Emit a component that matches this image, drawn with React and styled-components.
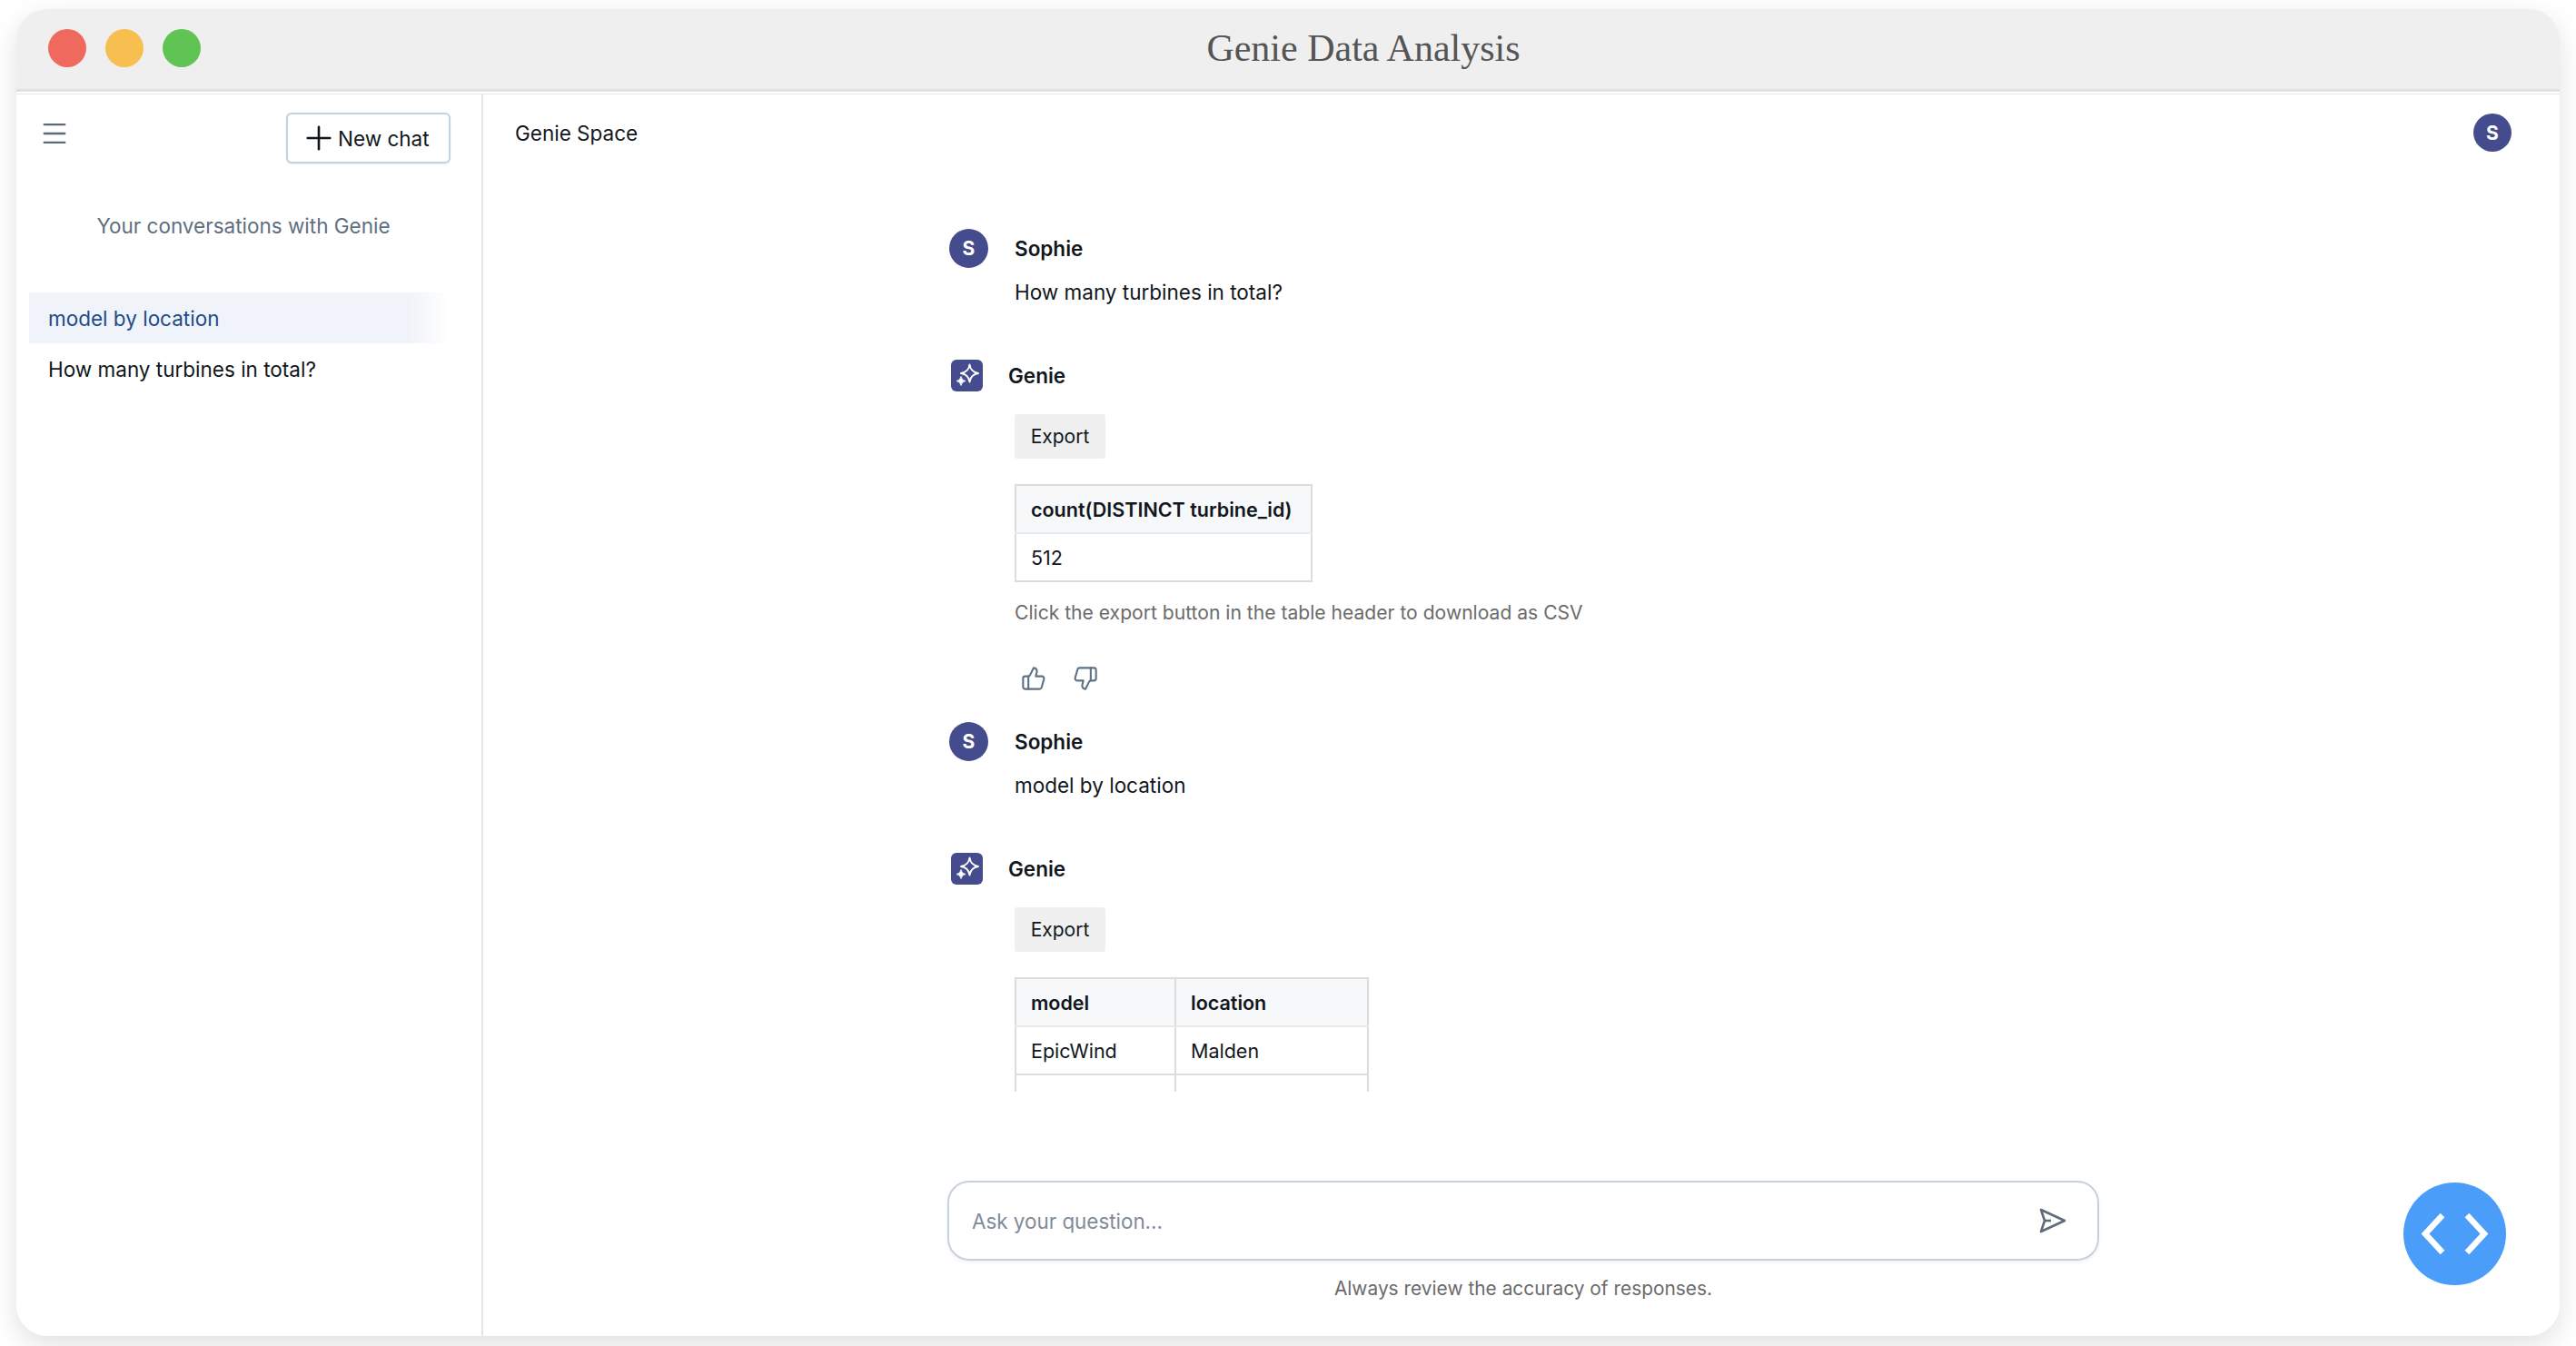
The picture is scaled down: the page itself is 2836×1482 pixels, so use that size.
import React from "react";
import styled, { createGlobalStyle } from "styled-components";
import { Menu, Plus, ThumbsUp, ThumbsDown } from "lucide-react";

const GlobalStyle = createGlobalStyle`
  html, body {
    margin: 0;
    padding: 0;
    background: #ffffff;
    font-family: Inter, "Liberation Sans", sans-serif;
    color: #11171c;
  }
  * { box-sizing: border-box; }
`;

const Page = styled.div`
  width: 2836px;
  height: 1482px;
  padding: 10px 18px 11px;
  overflow: hidden;
`;

const Window = styled.div`
  height: 100%;
  display: flex;
  flex-direction: column;
  background: #ffffff;
  border-radius: 34px;
  box-shadow: 0 10px 30px rgba(0, 0, 0, 0.12);
  overflow: hidden;
`;

const TitleBar = styled.div`
  height: 91px;
  flex-shrink: 0;
  margin-bottom: 2px;
  display: flex;
  align-items: center;
  padding: 0 37px 3px 35px;
  background: #efefef;
  border-bottom: 3px solid #e0e0e0;
`;

const Lights = styled.div`
  display: flex;
  gap: 21px;
`;

const Light = styled.span`
  width: 42px;
  height: 42px;
  border-radius: 50%;
  background: ${(p) => p.$color};
`;

const Title = styled.div`
  flex: 1;
  text-align: center;
  font-family: "Liberation Serif", serif;
  font-size: 42px;
  color: #555555;
`;

const Body = styled.div`
  flex: 1;
  min-height: 0;
  display: flex;
  border-top: 1px solid #e3e5e8;
`;

const Sidebar = styled.aside`
  width: 514px;
  flex-shrink: 0;
  border-right: 2px solid #e2e5e9;
  padding: 20px 0 0 14px;
`;

const SideTop = styled.div`
  display: flex;
  justify-content: space-between;
  align-items: flex-start;
  padding: 0 34px 0 11px;
`;

const MenuButton = styled.div`
  margin-top: 6px;
  display: flex;
  color: #5c6b7c;
`;

const NewChat = styled.button`
  width: 181px;
  height: 56px;
  display: flex;
  align-items: center;
  padding: 0 0 0 13px;
  background: #ffffff;
  border: 2px solid #c6d1de;
  border-radius: 6px;
  box-shadow: 0 1px 2px rgba(0, 0, 0, 0.08);
  font: 400 22.5px Inter, sans-serif;
  color: #11171c;
`;

const SideHeading = styled.div`
  margin-top: 51px;
  padding-right: 26px;
  text-align: center;
  font-size: 22.5px;
  line-height: 36px;
  color: #5f6f81;
`;

const ChatList = styled.div`
  margin-top: 55px;
  width: 464px;
`;

const ChatItem = styled.div`
  height: 56px;
  padding-left: 21px;
  display: flex;
  align-items: center;
  font-size: 22.5px;
  color: ${(p) => (p.$active ? "#1f4b87" : "#11171c")};
  background: ${(p) =>
    p.$active ? "linear-gradient(90deg, #f0f3f9 90%, rgba(240, 243, 249, 0))" : "transparent"};
`;

const Main = styled.main`
  flex: 1;
  min-width: 0;
  position: relative;
  display: flex;
  flex-direction: column;
`;

const MainHeader = styled.header`
  height: 84px;
  flex-shrink: 0;
  padding: 21px 53px 0 35px;
  display: flex;
  justify-content: space-between;
  align-items: flex-start;
`;

const SpaceName = styled.div`
  font-size: 22.5px;
  line-height: 44px;
  color: #11171c;
`;

const Avatar = styled.div`
  width: ${(p) => p.$size}px;
  height: ${(p) => p.$size}px;
  flex-shrink: 0;
  border-radius: 50%;
  display: flex;
  align-items: center;
  justify-content: center;
  background: #444c8e;
  color: #ffffff;
  font-size: 21px;
  font-weight: 700;
`;

const ChatColumn = styled.div`
  width: 1268px;
  margin-left: 511px;
  flex: 1;
  min-height: 0;
  display: flex;
  flex-direction: column;
`;

const Messages = styled.div`
  height: 1014px;
  flex-shrink: 0;
  padding: 64px 0 0 2px;
  overflow: hidden;
`;

const Message = styled.section`
  margin-bottom: ${(p) => p.$gap || 0}px;
`;

const SenderRow = styled.div`
  display: flex;
  align-items: center;
  gap: ${(p) => p.$gap}px;
  font-size: 22.5px;
  font-weight: 600;
  color: #11171c;
`;

const GenieBadge = styled.div`
  width: 35px;
  height: 35px;
  margin-left: 2px;
  border-radius: 6px;
  background: #444c8e;
  svg { display: block; }
`;

const Indented = styled.div`
  margin-left: 72px;
`;

const UserText = styled.p`
  margin: 9px 0 0;
  font-size: 22.5px;
  line-height: 36px;
`;

const ExportButton = styled.button`
  display: block;
  margin-top: 25px;
  width: 100px;
  height: 49px;
  padding: 0;
  border: none;
  border-radius: 3px;
  background: #f0f0f0;
  font: 400 21px Inter, sans-serif;
  color: #11171c;
`;

const Table = styled.table`
  margin-top: 28px;
  border-collapse: collapse;
  table-layout: fixed;
  width: ${(p) => p.$width}px;
  font-size: 21.5px;
`;

const Th = styled.th`
  height: 53px;
  padding: 0 16px;
  text-align: left;
  font-weight: 600;
  background: #f7f8fa;
  border: 2px solid #dcdcdc;
  border-bottom-color: #e8e9eb;
  white-space: nowrap;
`;

const Td = styled.td`
  height: 53px;
  padding: 0 16px;
  border: 2px solid #dcdcdc;
  white-space: nowrap;
`;

const Caption = styled.p`
  margin: 16px 0 0;
  font-size: 21.1px;
  line-height: 36px;
  color: #6b6b6b;
`;

const Feedback = styled.div`
  margin: 40px 0 0 7px;
  display: flex;
  gap: 29px;
  color: #5f7285;
  svg { display: block; }
`;

const InputBox = styled.div`
  margin-top: 98px;
  height: 88px;
  flex-shrink: 0;
  display: flex;
  align-items: center;
  padding: 0 34px 0 23px;
  border: 2px solid #c6d1de;
  border-radius: 24px;
  box-shadow: 0 2px 4px rgba(0, 0, 0, 0.06);
`;

const QuestionInput = styled.input`
  flex: 1;
  border: none;
  outline: none;
  background: transparent;
  font: 400 22.4px Inter, sans-serif;
  &::placeholder {
    color: #7f8b99;
    opacity: 1;
  }
`;

const Disclaimer = styled.div`
  margin-top: 15px;
  text-align: center;
  font-size: 20.9px;
  line-height: 32px;
  color: #6b6b6b;
`;

const CodeFab = styled.button`
  position: absolute;
  left: 2114px;
  top: 1198px;
  width: 113px;
  height: 113px;
  padding: 0;
  border: none;
  border-radius: 50%;
  background: #4a9df8;
  svg { display: block; }
`;

const SparkIcon = () => (
  <svg width="35" height="35" viewBox="0 0 35 35" fill="none">
    <path
      d="M20.5 5.5 Q21.5 13.5 30 15 Q21.5 16.5 20.5 24.5 Q19.5 16.5 11 15 Q19.5 13.5 20.5 5.5 Z"
      stroke="#fff"
      strokeWidth="2"
      strokeLinejoin="round"
    />
    <path d="M11 18.5 Q11.7 22.8 16 23.5 Q11.7 24.2 11 28.5 Q10.3 24.2 6 23.5 Q10.3 22.8 11 18.5 Z" fill="#fff" stroke="#fff" strokeWidth="0.8" />
  </svg>
);

const SendIcon = () => (
  <svg width="30" height="28" viewBox="0 0 30 28" fill="none" stroke="#5f6b78" strokeWidth="2.6" strokeLinejoin="round">
    <path d="M2 2 L28 14 L2 26 L6 14 Z" />
    <path d="M6 14 H13" />
  </svg>
);

const CodeIcon = () => (
  <svg width="113" height="113" viewBox="0 0 113 113" fill="none" stroke="#fff" strokeWidth="6.5">
    <path d="M43 36 L24 56.5 L43 77" />
    <path d="M70 36 L89 56.5 L70 77" />
  </svg>
);

const SophieMessage = ({ text }) => (
  <Message $gap={56}>
    <SenderRow $gap={29}>
      <Avatar $size={43}>S</Avatar>
      <span>Sophie</span>
    </SenderRow>
    <Indented>
      <UserText>{text}</UserText>
    </Indented>
  </Message>
);

const GenieHeader = () => (
  <SenderRow $gap={28}>
    <GenieBadge>
      <SparkIcon />
    </GenieBadge>
    <span>Genie</span>
  </SenderRow>
);

export default function App() {
  return (
    <Page>
      <GlobalStyle />
      <Window>
        <TitleBar>
          <Lights>
            <Light $color="#f0695e" />
            <Light $color="#f6bf50" />
            <Light $color="#5fc454" />
          </Lights>
          <Title>Genie Data Analysis</Title>
        </TitleBar>
        <Body>
          <Sidebar>
            <SideTop>
              <MenuButton>
                <Menu size={34} strokeWidth={1.6} />
              </MenuButton>
              <NewChat>
                <Plus size={42} strokeWidth={1.5} />
                New chat
              </NewChat>
            </SideTop>
            <SideHeading>Your conversations with Genie</SideHeading>
            <ChatList>
              <ChatItem $active>model by location</ChatItem>
              <ChatItem>How many turbines in total?</ChatItem>
            </ChatList>
          </Sidebar>
          <Main>
            <MainHeader>
              <SpaceName>Genie Space</SpaceName>
              <Avatar $size={42}>S</Avatar>
            </MainHeader>
            <ChatColumn>
              <Messages>
                <SophieMessage text="How many turbines in total?" />
                <Message $gap={34}>
                  <GenieHeader />
                  <Indented>
                    <ExportButton>Export</ExportButton>
                    <Table $width={328}>
                      <thead>
                        <tr>
                          <Th>count(DISTINCT turbine_id)</Th>
                        </tr>
                      </thead>
                      <tbody>
                        <tr>
                          <Td>512</Td>
                        </tr>
                      </tbody>
                    </Table>
                    <Caption>Click the export button in the table header to download as CSV</Caption>
                    <Feedback>
                      <ThumbsUp size={28} strokeWidth={1.8} />
                      <ThumbsDown size={28} strokeWidth={1.8} />
                    </Feedback>
                  </Indented>
                </Message>
                <SophieMessage text="model by location" />
                <Message>
                  <GenieHeader />
                  <Indented>
                    <ExportButton>Export</ExportButton>
                    <Table $width={388}>
                      <colgroup>
                        <col width="176" />
                        <col width="212" />
                      </colgroup>
                      <thead>
                        <tr>
                          <Th>model</Th>
                          <Th>location</Th>
                        </tr>
                      </thead>
                      <tbody>
                        <tr>
                          <Td>EpicWind</Td>
                          <Td>Malden</Td>
                        </tr>
                        <tr>
                          <Td>&nbsp;</Td>
                          <Td>&nbsp;</Td>
                        </tr>
                      </tbody>
                    </Table>
                  </Indented>
                </Message>
              </Messages>
              <InputBox>
                <QuestionInput placeholder="Ask your question..." />
                <SendIcon />
              </InputBox>
              <Disclaimer>Always review the accuracy of responses.</Disclaimer>
            </ChatColumn>
            <CodeFab>
              <CodeIcon />
            </CodeFab>
          </Main>
        </Body>
      </Window>
    </Page>
  );
}
